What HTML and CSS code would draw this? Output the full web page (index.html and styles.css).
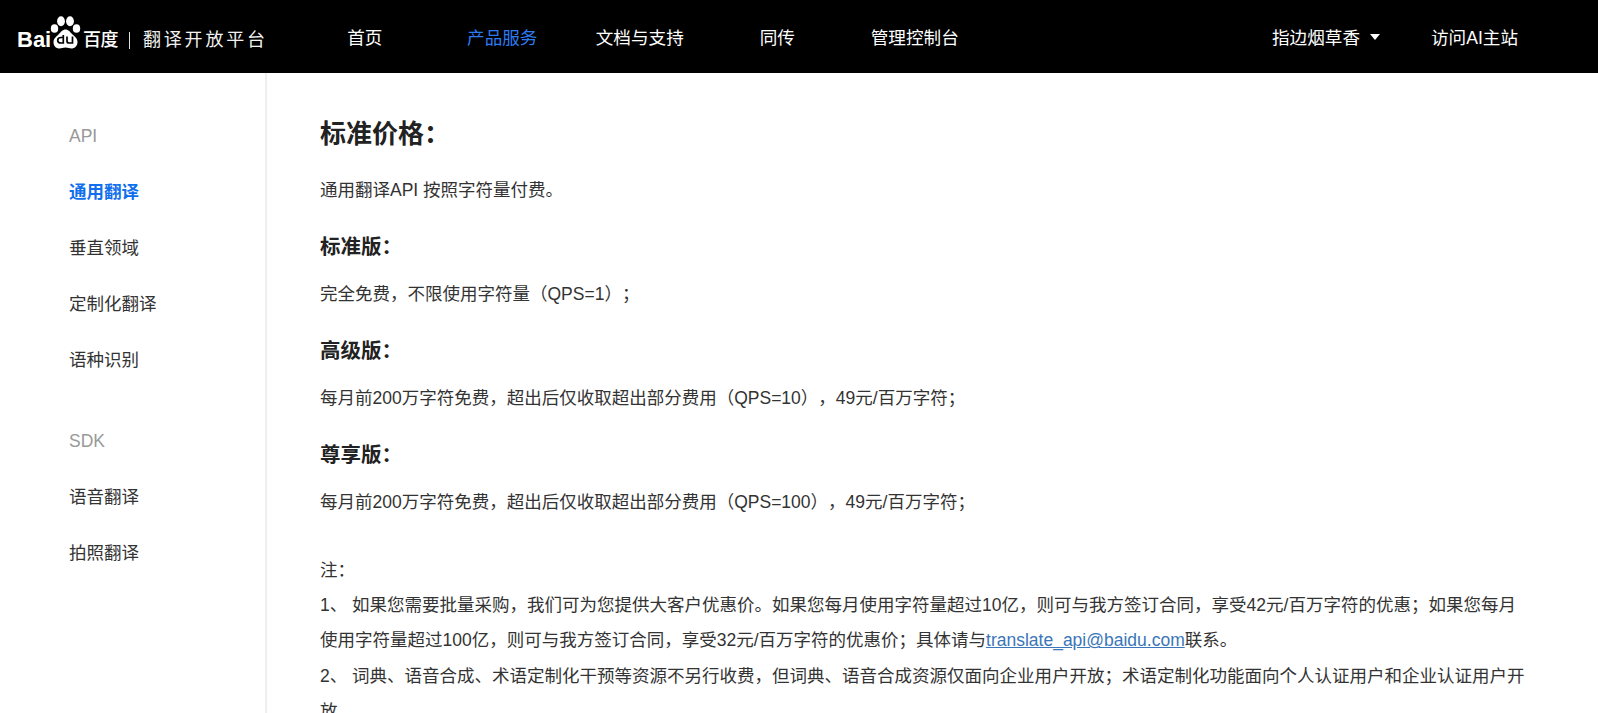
FILE: index.html
```html
<!DOCTYPE html>
<html lang="zh-CN">
<head>
<meta charset="utf-8">
<title>百度翻译开放平台</title>
<link rel="stylesheet" href="styles.css">
</head>
<body>
<header class="topbar">
  <div class="logo">
    <span class="logo-bai">Bai</span>
    <svg class="logo-paw" width="31" height="33" viewBox="0 0 31 33" aria-hidden="true">
      <ellipse cx="4.500" cy="12.500" rx="3.700" ry="4.300" fill="#fff"/>
      <ellipse cx="11" cy="5.200" rx="3.900" ry="5" fill="#fff"/>
      <ellipse cx="20" cy="5.200" rx="3.900" ry="5" fill="#fff"/>
      <ellipse cx="26.500" cy="12.500" rx="3.700" ry="4.300" fill="#fff"/>
      <path d="M15.500 13.500c3 0 4.500 2.500 7 5 2.500 2.200 5 4 5 7.500 0 4.500-3.500 6.500-6 6.500-2 0-3.500-1-6-1s-4 1-6 1c-3 0-6-2-6-6.500 0-3.500 3-5.500 5-7.500 2.500-2.500 4-5 7-5z" fill="#fff"/>
      <path d="M13.300 19v8h-2.300c-2 0-3.300-1.100-3.300-2.800 0-1.600 1.300-2.700 3.300-2.700h2.300M17 20.500v4.500c0 1.300.7 2 2 2h3.500v-6.500" fill="none" stroke="#000" stroke-width="1.700"/>
    </svg>
    <span class="logo-cn">百度</span>
    <span class="logo-sep"></span>
    <span class="logo-sub">翻译开放平台</span>
  </div>
  <nav class="nav">
    <a class="nav-item">首页</a>
    <a class="nav-item active">产品服务</a>
    <a class="nav-item">文档与支持</a>
    <a class="nav-item">同传</a>
    <a class="nav-item">管理控制台</a>
  </nav>
  <div class="user">
    <span class="user-name">指边烟草香</span><span class="caret"></span>
    <a class="ai-link">访问AI主站</a>
  </div>
</header>
<div class="main">
  <aside class="side">
    <div class="side-group">
      <div class="side-title">API</div>
      <a class="side-item current">通用翻译</a>
      <a class="side-item">垂直领域</a>
      <a class="side-item">定制化翻译</a>
      <a class="side-item">语种识别</a>
    </div>
    <div class="side-group">
      <div class="side-title">SDK</div>
      <a class="side-item">语音翻译</a>
      <a class="side-item">拍照翻译</a>
    </div>
  </aside>
  <main class="content">
    <h2 class="h-main">标准价格：</h2>
    <p class="para">通用翻译API 按照字符量付费。</p>
    <h3 class="h-sub">标准版：</h3>
    <p class="para">完全免费，不限使用字符量（QPS=1）；</p>
    <h3 class="h-sub">高级版：</h3>
    <p class="para">每月前200万字符免费，超出后仅收取超出部分费用（QPS=10），49元/百万字符；</p>
    <h3 class="h-sub">尊享版：</h3>
    <p class="para">每月前200万字符免费，超出后仅收取超出部分费用（QPS=100），49元/百万字符；</p>
    <div class="notes">
      注：<br>
      1、 如果您需要批量采购，我们可为您提供大客户优惠价。如果您每月使用字符量超过10亿，则可与我方签订合同，享受42元/百万字符的优惠；如果您每月使用字符量超过100亿，则可与我方签订合同，享受32元/百万字符的优惠价；具体请与<a class="mail">translate_api@baidu.com</a>联系。<br>
      2、 词典、语音合成、术语定制化干预等资源不另行收费，但词典、语音合成资源仅面向企业用户开放；术语定制化功能面向个人认证用户和企业认证用户开放。
    </div>
  </main>
</div>
</body>
</html>
```
FILE: styles.css
```css
* { box-sizing: border-box; }
html, body { margin: 0; height: 100%; overflow: hidden; background: #fff; }
body {
  font-family: "Liberation Sans", "Noto Sans CJK SC", sans-serif;
  color: #222;
  font-size: 17.5px;
  text-spacing-trim: space-all;
}
.topbar {
  height: 73px;
  background: #000;
  color: #fff;
  display: flex;
  align-items: center;
  font-size: 17.6px;
}
.logo {
  width: 296px;
  display: flex;
  align-items: center;
  padding-left: 17px;
  padding-top: 1px;
}
.logo-bai { font-size: 22px; font-weight: 700; line-height: 1; margin-top: 6px; width: 33px; }
.logo-paw { margin: -9px 0 0 0; flex: none; }
.logo-cn { font-size: 18px; font-weight: 500; line-height: 1; margin: 6px 0 0 2px; width: 35px; white-space: nowrap; letter-spacing: -0.4px; }
.logo-sep { width: 1px; height: 17px; background: #ddd; margin: 6px 13px 0 11px; }
.logo-sub { font-size: 18px; line-height: 1; letter-spacing: 2.8px; margin-top: 6px; white-space: nowrap; color: #f2f2f2; }
.nav { display: flex; }
.nav-item { width: 137.5px; text-align: center; }
.nav-item.active { color: #2e7bf0; }
.user { margin-left: auto; display: flex; align-items: center; padding-right: 80px; }
.caret {
  width: 0; height: 0; margin-left: 10px;
  border-left: 5px solid transparent;
  border-right: 5px solid transparent;
  border-top: 6px solid #fff;
}
.ai-link { margin-left: 51px; }
.main { display: flex; height: 640px; }
.side {
  width: 267px;
  flex: none;
  height: 100%;
  border-right: 2px solid #eee;
  padding: 35px 0 0 69px;
}
.side-group { margin-bottom: 25px; }
.side-title { height: 56px; line-height: 56px; color: #999; }
.side-item { display: block; height: 56px; line-height: 56px; color: #333; }
.side-item.current { color: #0f6fec; font-weight: 700; }
.content { padding-left: 53px; flex: 1; }
.h-main { font-size: 26px; font-weight: 700; line-height: 32px; margin: 45px 0 22px; color: #222; }
.para { margin: 0; line-height: 36px; color: #333; }
.h-sub { font-size: 20.5px; font-weight: 700; line-height: 30px; margin: 24px 0 14px; color: #222; }
.notes { margin-top: 33px; width: 1212px; line-height: 35.2px; color: #333; }
.mail { color: #3a76b8; text-decoration: underline; }
```
